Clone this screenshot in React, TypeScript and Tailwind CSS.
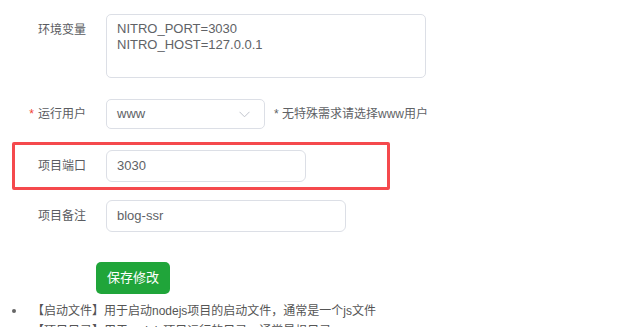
import React from 'react';

const font = { fontFamily: '"Liberation Sans", "Noto Sans CJK SC", sans-serif' };

const Label: React.FC<{ text: string; required?: boolean; width?: string }> = ({ text, required, width = 'w-[86px]' }) => (
  <div className={`${width} shrink-0 text-right text-[12px] leading-[16px] text-[#5a5c61]`}>
    {required && <span className="mr-[4px] text-[#f04134]">*</span>}
    {text}
  </div>
);

export default function App() {
  return (
    <div className="h-[327px] w-[625px] overflow-hidden bg-white" style={font}>
      <div className="flex flex-col pt-[14px]">
        {/* 环境变量 */}
        <div className="flex items-start">
          <div className="pt-[8px]">
            <Label text="环境变量" />
          </div>
          <textarea
            readOnly
            className="ml-[20px] h-[64px] w-[320px] resize-none rounded-[5px] border border-[#dcdfe6] px-[10px] pt-[6px] text-[13px] leading-[16px] text-[#606266] outline-none"
            style={font}
            value={'NITRO_PORT=3030\nNITRO_HOST=127.0.0.1'}
          />
        </div>

        {/* 运行用户 */}
        <div className="mt-[21px] flex items-center">
          <Label text="运行用户" required />
          <div className="ml-[20px] flex h-[30px] w-[159px] items-center justify-between rounded-[5px] border border-[#dcdfe6] pl-[10px] pr-[14px] text-[13px] text-[#606266]">
            <span>www</span>
            <svg width="11" height="7" viewBox="0 0 11 7" fill="none">
              <path d="M0.5 0.8L5.5 5.8L10.5 0.8" stroke="#c0c4cc" strokeWidth="1" />
            </svg>
          </div>
          <span className="ml-[9px] text-[12px] text-[#606266]">* 无特殊需求请选择www用户</span>
        </div>

        {/* 项目端口 */}
        <div className="ml-[12px] mt-[13px] flex h-[48px] w-[378px] items-center rounded-[2px] border-[3px] border-[#f5494d]">
          <Label text="项目端口" width="w-[71px]" />
          <div className="ml-[20px] flex h-[32px] w-[200px] items-center rounded-[6px] border border-[#dcdfe6] px-[10px] text-[13px] text-[#606266]">
            3030
          </div>
        </div>

        {/* 项目备注 */}
        <div className="mt-[10px] flex items-center">
          <Label text="项目备注" />
          <div className="ml-[20px] flex h-[32px] w-[240px] items-center rounded-[6px] border border-[#dcdfe6] px-[10px] text-[13px] text-[#606266]">
            blog-ssr
          </div>
        </div>

        {/* 保存 */}
        <div className="ml-[96px] mt-[30px]">
          <button className="h-[32px] w-[74px] rounded-[5px] bg-[#20a53a] text-[13px] text-white" style={font}>
            保存修改
          </button>
        </div>

        {/* 说明 */}
        <div className="mt-[7px] flex flex-col text-[12px] leading-[20px] text-[#555]">
          <div className="flex items-center">
            <span className="ml-[12px] h-[4px] w-[4px] rounded-full bg-[#666]" />
            <span className="ml-[16px]">【启动文件】用于启动nodejs项目的启动文件，通常是一个js文件</span>
          </div>
          <div className="flex items-center">
            <span className="ml-[12px] h-[4px] w-[4px] rounded-full bg-[#666]" />
            <span className="ml-[16px]">【项目目录】用于nodejs项目运行的目录，通常是根目录</span>
          </div>
        </div>
      </div>
    </div>
  );
}
